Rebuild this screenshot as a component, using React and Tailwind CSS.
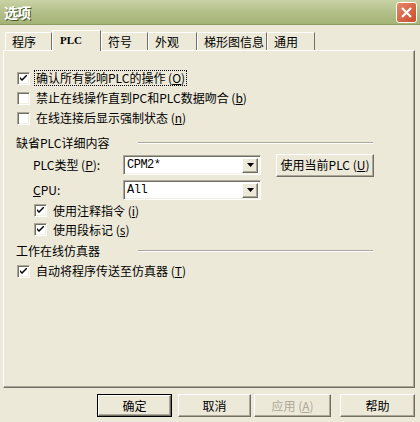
const raised =
  "border border-t-white border-l-white border-r-[#716f64] border-b-[#716f64] shadow-[inset_-1px_-1px_0_#aca899]";
const sunken =
  "border border-t-[#aca899] border-l-[#aca899] border-r-white border-b-white shadow-[inset_1px_1px_0_#716f64,inset_-1px_-1px_0_#f1efe2]";

const Check = ({ checked }) => (
  <span className={`w-[13px] h-[13px] bg-white shrink-0 flex items-center justify-center ${sunken}`}>
    {checked && (
      <svg width="7" height="7" viewBox="0 0 7 7">
        <path d="M0 2 L0 4 L2 6 L7 1 L7 -1 L2 4 Z" fill="#000" />
      </svg>
    )}
  </span>
);

const Acc = ({ children }) => <span className="underline underline-offset-1">{children}</span>;

const CheckRow = ({ checked, children, focus, className = "h-[20px]" }) => (
  <div className={`flex items-center ${className}`}>
    <Check checked={checked} />
    <span className={`ml-[5px] leading-[14px] px-[1px] ${focus ? "outline outline-1 outline-dotted outline-black" : ""}`}>
      {children}
    </span>
  </div>
);

const GroupLabel = ({ children }) => (
  <div className="flex items-center h-[20px]">
    <span className="w-[122px]">{children}</span>
    <div className="w-[235px] border-t border-t-[#aca899] border-b border-b-white" />
  </div>
);

const Select = ({ value }) => (
  <div className={`w-[138px] h-[20px] bg-white flex items-center justify-between pl-[3px] pr-[2px] ${sunken}`}>
    <span className="font-['Liberation_Mono',monospace] text-[12px] tracking-[-0.5px]">{value}</span>
    <span className={`w-[16px] h-[15px] bg-[#ece9d8] flex items-center justify-center ${raised}`}>
      <svg width="7" height="4" viewBox="0 0 7 4">
        <path d="M0 0 H7 L3.5 4 Z" fill="#000" />
      </svg>
    </span>
  </div>
);

const Button = ({ children, disabled, def, className = "" }) => (
  <div
    className={`h-[23px] flex items-center justify-center ${
      def ? "border border-black" : ""
    } ${className}`}
  >
    <div className={`w-full h-full flex items-center justify-center ${raised} ${disabled ? "text-[#aca899]" : ""}`}>
      {children}
    </div>
  </div>
);

const tabs = [
  { label: "程序", w: "w-[47px]" },
  { label: "PLC", w: "w-[49px]", active: true },
  { label: "符号", w: "w-[47px]" },
  { label: "外观", w: "w-[49px]" },
  { label: "梯形图信息", w: "w-[70px]" },
  { label: "通用", w: "w-[48px]" },
];

export default function App() {
  return (
    <div className="w-[420px] h-[422px] bg-[#ece9d8] flex flex-col overflow-hidden font-['Noto_Sans_CJK_SC',sans-serif] text-[12px] text-black">
      <div className="h-[25px] shrink-0 flex items-center justify-between pl-[4px] pr-[3px] bg-gradient-to-b from-[#c9d2a6] via-[#b3c08a] to-[#a4b376] border-b border-b-[#8d9c62]">
        <span className="text-white font-bold text-[14px] tracking-[-1px] [text-shadow:1px_1px_0_#4a5a2a]">选项</span>
        <div className="w-[21px] h-[21px] rounded-[3px] border border-white bg-gradient-to-br from-[#e8866a] to-[#c94a26] flex items-center justify-center">
          <svg width="11" height="11" viewBox="0 0 11 11">
            <path d="M1 1 L10 10 M10 1 L1 10" stroke="#fff" strokeWidth="2.2" />
          </svg>
        </div>
      </div>

      <div className="flex items-end h-[25px] pl-[5px] shrink-0">
        {tabs.map((t) =>
          t.active ? (
            <div
              key={t.label}
              className={`${t.w} h-[21px] -mb-px relative z-10 bg-[#ece9d8] border-t border-l border-t-white border-l-white border-r border-r-[#716f64] rounded-tl-[2px] pl-[7px] pt-[2px] leading-[14px] font-['Liberation_Serif',serif] font-bold text-[11px]`}
            >
              {t.label}
            </div>
          ) : (
            <div
              key={t.label}
              className={`${t.w} h-[18px] border-t border-l border-t-white border-l-white border-r border-r-[#716f64] rounded-tl-[2px] pl-[6px] pt-[1px] leading-[15px]`}
            >
              {t.label}
            </div>
          )
        )}
      </div>

      <div className="ml-[3px] w-[412px] h-[338px] border-t border-l border-t-white border-l-white border-r border-b border-r-[#716f64] border-b-[#716f64] shadow-[inset_-1px_-1px_0_#aca899] pl-[13px] pt-[17px]">
        <CheckRow checked focus>
          确认所有影响PLC的操作 (<Acc>O</Acc>)
        </CheckRow>
        <CheckRow>
          禁止在线操作直到PC和PLC数据吻合 (<Acc>b</Acc>)
        </CheckRow>
        <CheckRow>
          在线连接后显示强制状态 (<Acc>n</Acc>)
        </CheckRow>

        <div className="mt-[5px] -ml-[1px]">
          <GroupLabel>缺省PLC详细内容</GroupLabel>
        </div>

        <div className="flex items-center h-[24px] pl-[16px]">
          <span className="w-[90px]">
            PLC类型 (<Acc>P</Acc>):
          </span>
          <Select value="CPM2*" />
          <Button className="ml-[15px] w-[98px] h-[22px]">
            使用当前PLC (<Acc>U</Acc>)
          </Button>
        </div>
        <div className="flex items-center h-[24px] pl-[16px] mt-[1px]">
          <span className="w-[90px]">
            <Acc>C</Acc>PU:
          </span>
          <Select value="All" />
        </div>
        <div className="pl-[17px] -mt-[1px]">
          <CheckRow checked className="h-[19px]">
            使用注释指令 (<Acc>i</Acc>)
          </CheckRow>
          <CheckRow checked className="h-[19px]">
            使用段标记 (<Acc>s</Acc>)
          </CheckRow>
        </div>

        <div className="mt-[2px] -ml-[1px]">
          <GroupLabel>工作在线仿真器</GroupLabel>
        </div>
        <CheckRow checked>
          自动将程序传送至仿真器 (<Acc>T</Acc>)
        </CheckRow>
      </div>

      <div className="flex items-center mt-[6px] pl-[97px]">
        <Button def className="w-[75px]">
          确定
        </Button>
        <Button className="w-[73px] ml-[6px]">取消</Button>
        <Button disabled className="w-[77px] ml-[3px]">
          应用 (<Acc>A</Acc>)
        </Button>
        <Button className="w-[75px] ml-[9px]">帮助</Button>
      </div>
    </div>
  );
}
